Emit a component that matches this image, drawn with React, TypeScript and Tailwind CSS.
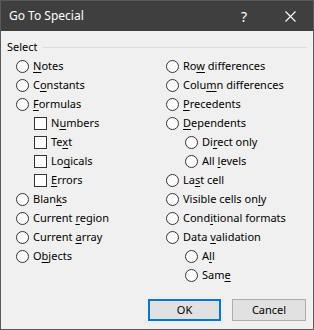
import type { ReactNode } from 'react'

type Opt = { label: string; key: number; kind: 'radio' | 'check'; indent?: boolean }

const LEFT: Array<Opt> = [
  { label: 'Notes', key: 0, kind: 'radio' },
  { label: 'Constants', key: 1, kind: 'radio' },
  { label: 'Formulas', key: 0, kind: 'radio' },
  { label: 'Numbers', key: 1, kind: 'check', indent: true },
  { label: 'Text', key: 2, kind: 'check', indent: true },
  { label: 'Logicals', key: 2, kind: 'check', indent: true },
  { label: 'Errors', key: 0, kind: 'check', indent: true },
  { label: 'Blanks', key: 4, kind: 'radio' },
  { label: 'Current region', key: 8, kind: 'radio' },
  { label: 'Current array', key: 8, kind: 'radio' },
  { label: 'Objects', key: 1, kind: 'radio' },
]

const RIGHT: Array<Opt> = [
  { label: 'Row differences', key: 2, kind: 'radio' },
  { label: 'Column differences', key: 4, kind: 'radio' },
  { label: 'Precedents', key: 0, kind: 'radio' },
  { label: 'Dependents', key: 0, kind: 'radio' },
  { label: 'Direct only', key: 2, kind: 'radio', indent: true },
  { label: 'All levels', key: 4, kind: 'radio', indent: true },
  { label: 'Last cell', key: 2, kind: 'radio' },
  { label: 'Visible cells only', key: 16, kind: 'radio' },
  { label: 'Conditional formats', key: 4, kind: 'radio' },
  { label: 'Data validation', key: 5, kind: 'radio' },
  { label: 'All', key: 1, kind: 'radio', indent: true },
  { label: 'Same', key: 3, kind: 'radio', indent: true },
]

function Accel({ label, idx }: { label: string; idx: number }) {
  return <span>{label.slice(0, idx)}<span className="underline underline-offset-[2px]">{label[idx]}</span>{label.slice(idx + 1)}</span>
}

function Row({ opt, sub }: { opt: Opt; sub: number }) {
  const box: ReactNode = opt.kind === 'radio'
    ? <span className="h-[13px] w-[13px] shrink-0 rounded-full border border-[#333] bg-white" />
    : <span className="h-[13px] w-[13px] shrink-0 border border-[#333] bg-white" />
  return (
    <div className={`flex h-[19px] items-center ${opt.indent ? (sub === 18 ? 'pl-[18px]' : 'pl-[19px]') : ''}`}>
      {box}
      <span className="ml-[4px] whitespace-nowrap"><Accel label={opt.label} idx={opt.key} /></span>
    </div>
  )
}

export default function App() {
  return (
    <div className="flex h-[330px] w-[314px] flex-col border border-[#5a5a5a] bg-[#f0f0f0] text-[11px] text-black" style={{ fontFamily: '"Noto Sans", sans-serif' }}>
      <div className="flex h-[30px] shrink-0 items-center bg-[#3f3f3f] text-white">
        <span className="pl-[8px] text-[12px]">Go To Special</span>
        <span className="ml-auto w-[10px] text-center text-[14px]">?</span>
        <svg className="ml-[36px] mr-[17px]" width="11" height="11" viewBox="0 0 11 11">
          <path d="M0.5 0.5 L10.5 10.5 M10.5 0.5 L0.5 10.5" stroke="#fff" strokeWidth="1.1" />
        </svg>
      </div>

      <div className="flex h-[16px] items-center pl-[6px] pr-[6px] mt-[8px]">
        <span>Select</span>
        <span className="ml-[5px] h-px flex-1 bg-[#dcdcdc]" />
      </div>

      <div className="mt-[2px] grid grid-cols-[150px_1fr] pl-[15px]">
        <div>{LEFT.map((o) => <Row key={o.label} opt={o} sub={18} />)}</div>
        <div>{RIGHT.map((o) => <Row key={o.label} opt={o} sub={19} />)}</div>
      </div>

      <div className="mt-[14px] flex justify-end gap-[11px] pr-[7px]">
        <button type="button" className="h-[22px] w-[73px] border-2 border-[#0078d7] bg-[#e1e1e1]">OK</button>
        <button type="button" className="h-[22px] w-[74px] border border-[#adadad] bg-[#e1e1e1]">Cancel</button>
      </div>
    </div>
  )
}
